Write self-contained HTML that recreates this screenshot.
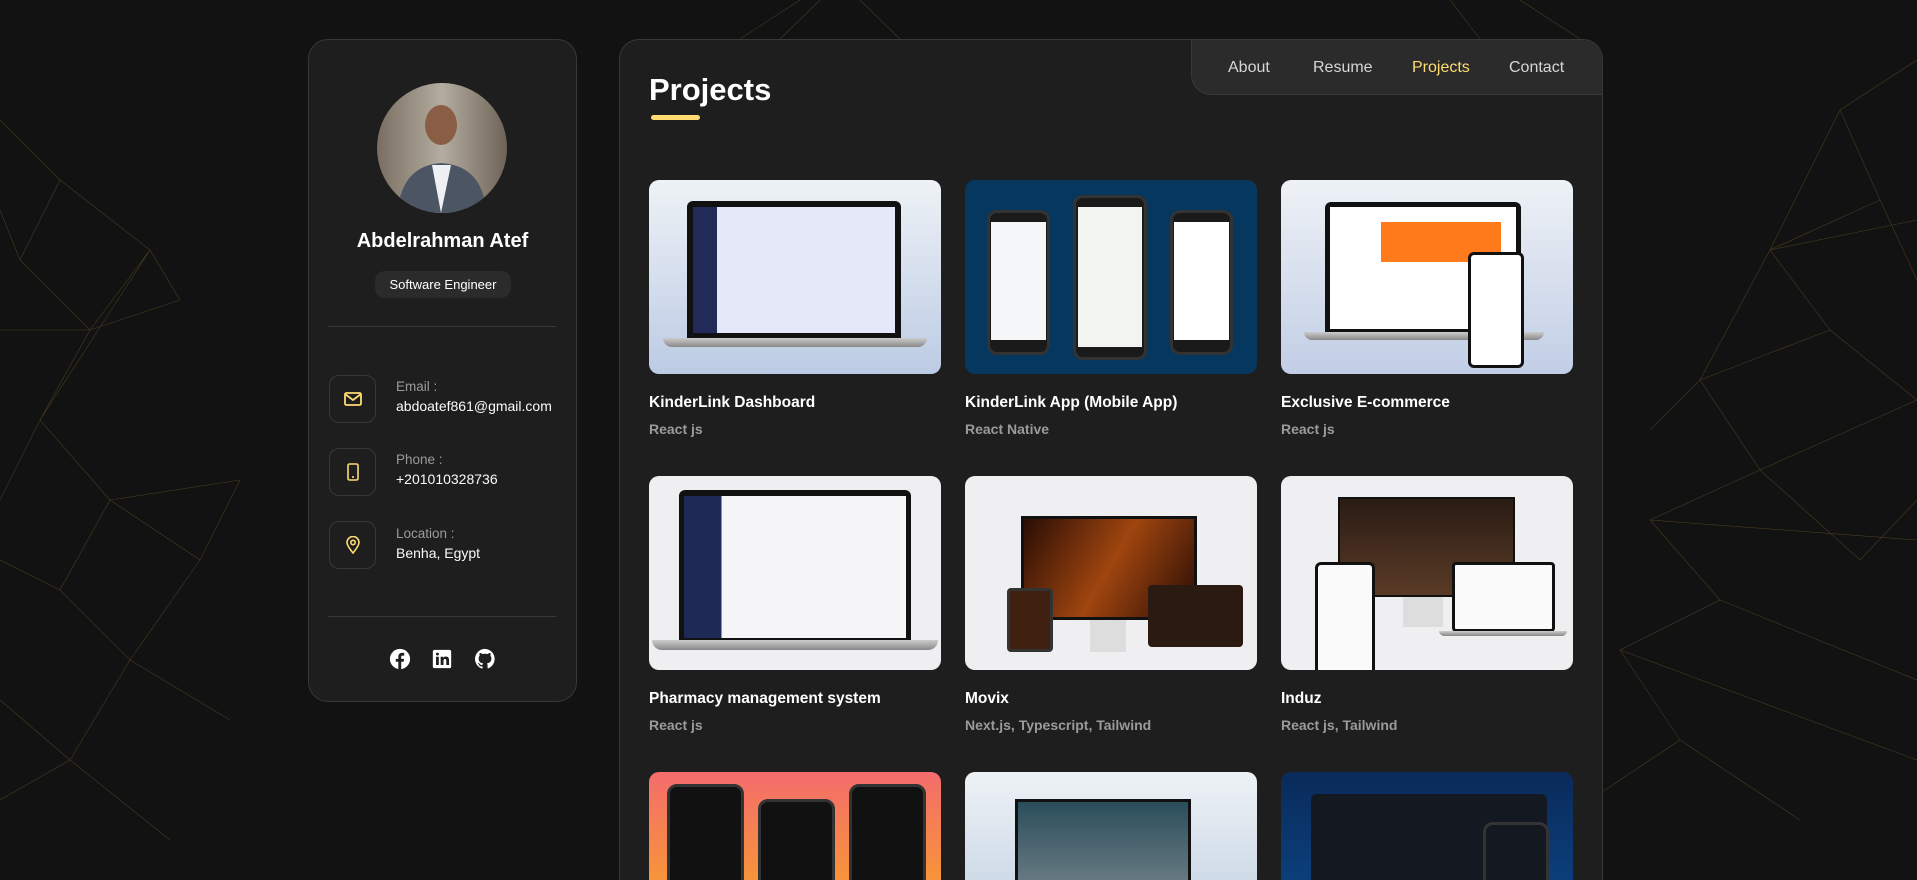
<!DOCTYPE html>
<html><head><meta charset="utf-8"><style>
*{box-sizing:border-box;margin:0;padding:0}
html,body{width:1917px;height:880px;overflow:hidden}
body{background:#121212;font-family:"Liberation Sans",sans-serif;color:#fff;position:relative}
#bg{position:absolute;left:0;top:0}
.side{position:absolute;left:308px;top:39px;width:269px;height:663px;background:#1e1e1f;border:1px solid #383838;border-radius:20px}
.avatar{position:absolute;left:68px;top:43px;width:130px;height:130px;border-radius:50%;overflow:hidden}
.name{position:absolute;top:190px;width:100%;text-align:center;font-size:20px;font-weight:bold}
.badge{position:absolute;left:66px;top:231px;width:136px;height:27px;border-radius:10px;background:#2b2b2c;font-size:13px;text-align:center;line-height:27px}
.hr{position:absolute;left:19px;width:228px;height:1px;background:#383838}
.ib{position:absolute;left:20px;width:47px;height:48px;border:1px solid #383838;border-radius:10px;background:#1e1e1f;display:flex;align-items:center;justify-content:center}
.lbl{position:absolute;left:87px;font-size:13.5px;color:#9a9a9a}
.val{position:absolute;left:87px;font-size:14px;color:#fafafa}
.soc{position:absolute;top:608px;width:22px;height:22px}
.main{position:absolute;left:619px;top:39px;width:984px;height:841px;background:#1e1e1f;border:1px solid #383838;border-bottom:none;border-radius:20px 20px 0 0;overflow:hidden}
.nav{position:absolute;right:-1px;top:-1px;width:412px;height:56px;background:#2b2b2c;border:1px solid #383838;border-radius:0 20px 0 20px}
.nav span{position:absolute;top:19px;font-size:16px;color:#d6d6d6}
h2{position:absolute;left:29px;top:32px;font-size:31px;font-weight:bold}
.ul{position:absolute;left:31px;top:75px;width:49px;height:5px;border-radius:3px;background:#ffdb70}
.card{position:absolute;width:292px}
.th{width:292px;height:194px;border-radius:10px;overflow:hidden;position:relative}
.ct{font-size:15.5px;font-weight:bold;margin-top:20px}
.cs{font-size:14px;color:#9a9a9a;margin-top:9px;font-weight:bold}
.lap{position:absolute;background:#111;border-radius:6px 6px 0 0}
.scr{position:absolute;background:#e9ecf7}
.base{position:absolute;background:linear-gradient(#ccc,#888);border-radius:0 0 10px 10px}
.ph{position:absolute;background:#1a1a1a;border-radius:10px;border:3px solid #333}
</style></head><body>
<svg id="bg" width="1917" height="880" stroke="#b08a3a" stroke-opacity=".35" stroke-width=".6" fill="none">
<path d="M0 120L60 180L20 260L90 330L40 420L110 500L60 590L130 660L70 760L0 700M60 180L150 250L90 330M150 250L40 420M110 500L200 560L130 660M200 560L240 480L110 500M0 330L90 330M40 420L0 500M70 760L170 840M130 660L230 720M20 260L0 210M0 560L60 590M90 330L180 300L150 250M0 800L70 760"/>
<path d="M1917 60L1840 110L1880 200L1770 250L1830 330L1700 380L1760 470L1650 520L1720 600L1620 650L1680 740L1590 800M1840 110L1770 250L1700 380M1880 200L1917 280M1830 330L1917 400L1760 470M1650 520L1917 540M1720 600L1917 680M1680 740L1800 820M1620 650L1917 760M1700 380L1650 430M1770 250L1917 220M1760 470L1860 560L1917 500"/>
<path d="M820 0L780 39M860 0L900 39M1520 0L1580 39M1450 0L1480 39M800 0L740 39"/>
</svg>
<div class="side">
<div class="avatar"><svg width="130" height="130"><defs><linearGradient id="g" x1="0" x2="1"><stop offset="0" stop-color="#7a6e62"/><stop offset=".5" stop-color="#b4aca0"/><stop offset="1" stop-color="#6e6357"/></linearGradient></defs><rect width="130" height="130" fill="url(#g)"/><ellipse cx="64" cy="42" rx="16" ry="20" fill="#8a5e45"/><path d="M20 130C24 95 40 82 64 80C90 82 106 95 110 130Z" fill="#4c5563"/><path d="M55 82L64 130L74 82Z" fill="#eef0f4"/></svg></div>
<div class="name">Abdelrahman Atef</div>
<div class="badge">Software Engineer</div>
<div class="hr" style="top:286px"></div>
<div class="ib" style="top:335px"><svg width="18" height="14" viewBox="0 0 18 14" fill="none" stroke="#ffdb70" stroke-width="1.8"><rect x="1" y="1" width="16" height="12" rx="1.5"/><path d="M1 2l8 6 8-6"/></svg></div>
<div class="lbl" style="top:339px">Email :</div><div class="val" style="top:358px">abdoatef861@gmail.com</div>
<div class="ib" style="top:408px"><svg width="12" height="18" viewBox="0 0 12 18" fill="none" stroke="#ffdb70" stroke-width="1.6"><rect x="1" y="1" width="10" height="16" rx="1.5"/><path d="M5 14h2"/></svg></div>
<div class="lbl" style="top:412px">Phone :</div><div class="val" style="top:431px">+201010328736</div>
<div class="ib" style="top:481px"><svg width="14" height="18" viewBox="0 0 14 18" fill="none" stroke="#ffdb70" stroke-width="1.6"><path d="M7 17C3 12 1 9 1 6.5a6 6 0 0112 0C13 9 11 12 7 17z"/><circle cx="7" cy="6.5" r="2.2"/></svg></div>
<div class="lbl" style="top:486px">Location :</div><div class="val" style="top:505px">Benha, Egypt</div>
<div class="hr" style="top:576px"></div>
<svg class="soc" style="left:80px" viewBox="0 0 24 24"><circle cx="12" cy="12" r="11" fill="#fff"/><path d="M13.3 23v-8h2.7l.4-3.2h-3.1V9.8c0-.9.3-1.5 1.6-1.5h1.7V5.4c-.3 0-1.3-.1-2.4-.1-2.4 0-4 1.4-4 4.1v2.4H7.4V15h2.8v8z" fill="#1e1e1f"/></svg>
<svg class="soc" style="left:122px" viewBox="0 0 24 24"><rect x="2" y="2" width="20" height="20" rx="2" fill="#fff"/><path d="M5.5 9.5h3v9h-3zM7 5a1.6 1.6 0 110 3.2A1.6 1.6 0 017 5zM10.5 9.5h2.8v1.3c.4-.8 1.4-1.5 2.9-1.5 3 0 3.5 2 3.5 4.5v4.7h-3v-4.2c0-1 0-2.3-1.4-2.3s-1.7 1.1-1.7 2.2v4.3h-3z" fill="#1e1e1f"/></svg>
<svg class="soc" style="left:165px" viewBox="0 0 24 24"><path fill="#fff" d="M12 1a11 11 0 00-3.5 21.4c.6.1.8-.2.8-.5v-2c-3.1.7-3.7-1.4-3.7-1.4-.5-1.3-1.2-1.6-1.2-1.6-1-.7.1-.7.1-.7 1.1.1 1.7 1.1 1.7 1.1 1 1.7 2.6 1.2 3.2.9.1-.7.4-1.2.7-1.5-2.4-.3-5-1.2-5-5.4 0-1.2.4-2.2 1.1-2.9-.1-.3-.5-1.4.1-2.9 0 0 .9-.3 3 1.1a10.5 10.5 0 015.5 0c2.1-1.4 3-1.1 3-1.1.6 1.5.2 2.6.1 2.9.7.8 1.1 1.7 1.1 2.9 0 4.2-2.6 5.1-5 5.4.4.3.8 1 .8 2v3c0 .3.2.6.8.5A11 11 0 0012 1z"/></svg>
</div>
<div class="main">
<div class="nav"><span style="left:36px">About</span><span style="left:121px">Resume</span><span style="left:220px;color:#ffdb70">Projects</span><span style="left:317px">Contact</span></div>
<h2>Projects</h2><div class="ul"></div>

<div class="card" style="left:29px;top:140px"><div class="th" style="background:linear-gradient(#eef2f6,#bccbe4)"><div class="lap" style="left:38px;top:21px;width:214px;height:137px"></div><div class="scr" style="left:44px;top:27px;width:202px;height:126px;background:linear-gradient(90deg,#222a5a 12%,#e4e8f8 12%)"></div><div class="base" style="left:14px;top:158px;width:264px;height:9px"></div></div><div class="ct">KinderLink Dashboard</div><div class="cs">React js</div></div>
<div class="card" style="left:345px;top:140px"><div class="th" style="background:#06375e"><div class="ph" style="left:22px;top:30px;width:63px;height:145px"></div><div class="ph" style="left:108px;top:15px;width:74px;height:165px"></div><div class="ph" style="left:205px;top:30px;width:63px;height:145px"></div><div style="position:absolute;left:26px;top:42px;width:55px;height:118px;background:#f4f6f8"></div><div style="position:absolute;left:113px;top:27px;width:64px;height:140px;background:#f2f4f2"></div><div style="position:absolute;left:209px;top:42px;width:55px;height:118px;background:#fff"></div></div><div class="ct">KinderLink App (Mobile App)</div><div class="cs">React Native</div></div>
<div class="card" style="left:661px;top:140px"><div class="th" style="background:linear-gradient(#eef2f6,#c2cee6)"><div class="lap" style="left:44px;top:22px;width:196px;height:130px"></div><div class="scr" style="left:49px;top:27px;width:186px;height:122px;background:#fff"></div><div style="position:absolute;left:100px;top:42px;width:120px;height:40px;background:#ff7a1a"></div><div class="base" style="left:23px;top:152px;width:240px;height:8px"></div><div class="ph" style="left:187px;top:72px;width:56px;height:116px;border-radius:6px;background:#fff;border-color:#111"></div></div><div class="ct">Exclusive E-commerce</div><div class="cs">React js</div></div>

<div class="card" style="left:29px;top:436px"><div class="th" style="background:#efeff1"><div class="lap" style="left:30px;top:14px;width:232px;height:151px"></div><div class="scr" style="left:35px;top:20px;width:222px;height:142px;background:linear-gradient(90deg,#1e2a55 17%,#f5f5f7 17%)"></div><div class="base" style="left:3px;top:164px;width:286px;height:10px"></div></div><div class="ct">Pharmacy management system</div><div class="cs">React js</div></div>
<div class="card" style="left:345px;top:436px"><div class="th" style="background:#efeff1"><div style="position:absolute;left:56px;top:40px;width:176px;height:104px;background:linear-gradient(120deg,#2a0d05,#a0450f,#2a0d05);border:3px solid #111"></div><div style="position:absolute;left:125px;top:144px;width:36px;height:32px;background:#ddd"></div><div class="ph" style="left:42px;top:112px;width:46px;height:64px;border-radius:4px;background:#402010"></div><div class="lap" style="left:183px;top:109px;width:95px;height:62px;border-radius:4px;background:#2a1a12"></div></div><div class="ct">Movix</div><div class="cs">Next.js, Typescript, Tailwind</div></div>
<div class="card" style="left:661px;top:436px"><div class="th" style="background:#efeff1"><div style="position:absolute;left:57px;top:21px;width:177px;height:100px;background:linear-gradient(#2a1c14,#5a3b26);border:2px solid #111"></div><div style="position:absolute;left:122px;top:121px;width:40px;height:30px;background:#ddd"></div><div class="ph" style="left:34px;top:86px;width:60px;height:113px;border-radius:6px;background:#fafafa;border-color:#111"></div><div class="lap" style="left:171px;top:86px;width:103px;height:70px;border-radius:4px;background:#fafafa;border:3px solid #111"></div><div class="base" style="left:158px;top:155px;width:128px;height:5px"></div></div><div class="ct">Induz</div><div class="cs">React js, Tailwind</div></div>

<div class="card" style="left:29px;top:732px"><div class="th" style="height:108px;border-radius:10px 10px 0 0;background:linear-gradient(#f46c6c,#f7943a)"><div class="ph" style="left:18px;top:12px;width:77px;height:110px;background:#111"></div><div class="ph" style="left:109px;top:27px;width:77px;height:95px;background:#111"></div><div class="ph" style="left:200px;top:12px;width:77px;height:110px;background:#111"></div></div></div>
<div class="card" style="left:345px;top:732px"><div class="th" style="height:108px;border-radius:10px 10px 0 0;background:linear-gradient(#eef2f6,#cfdbe8)"><div style="position:absolute;left:50px;top:27px;width:176px;height:95px;background:linear-gradient(#2a4d5a,#6e7f86);border:3px solid #111"></div></div></div>
<div class="card" style="left:661px;top:732px"><div class="th" style="height:108px;border-radius:10px 10px 0 0;background:linear-gradient(#0a2a5a,#0b3f7a)"><div class="lap" style="left:30px;top:22px;width:236px;height:100px;background:#141820"></div><div class="ph" style="left:202px;top:50px;width:66px;height:70px;background:#141820"></div></div></div>
</div>
</body></html>
